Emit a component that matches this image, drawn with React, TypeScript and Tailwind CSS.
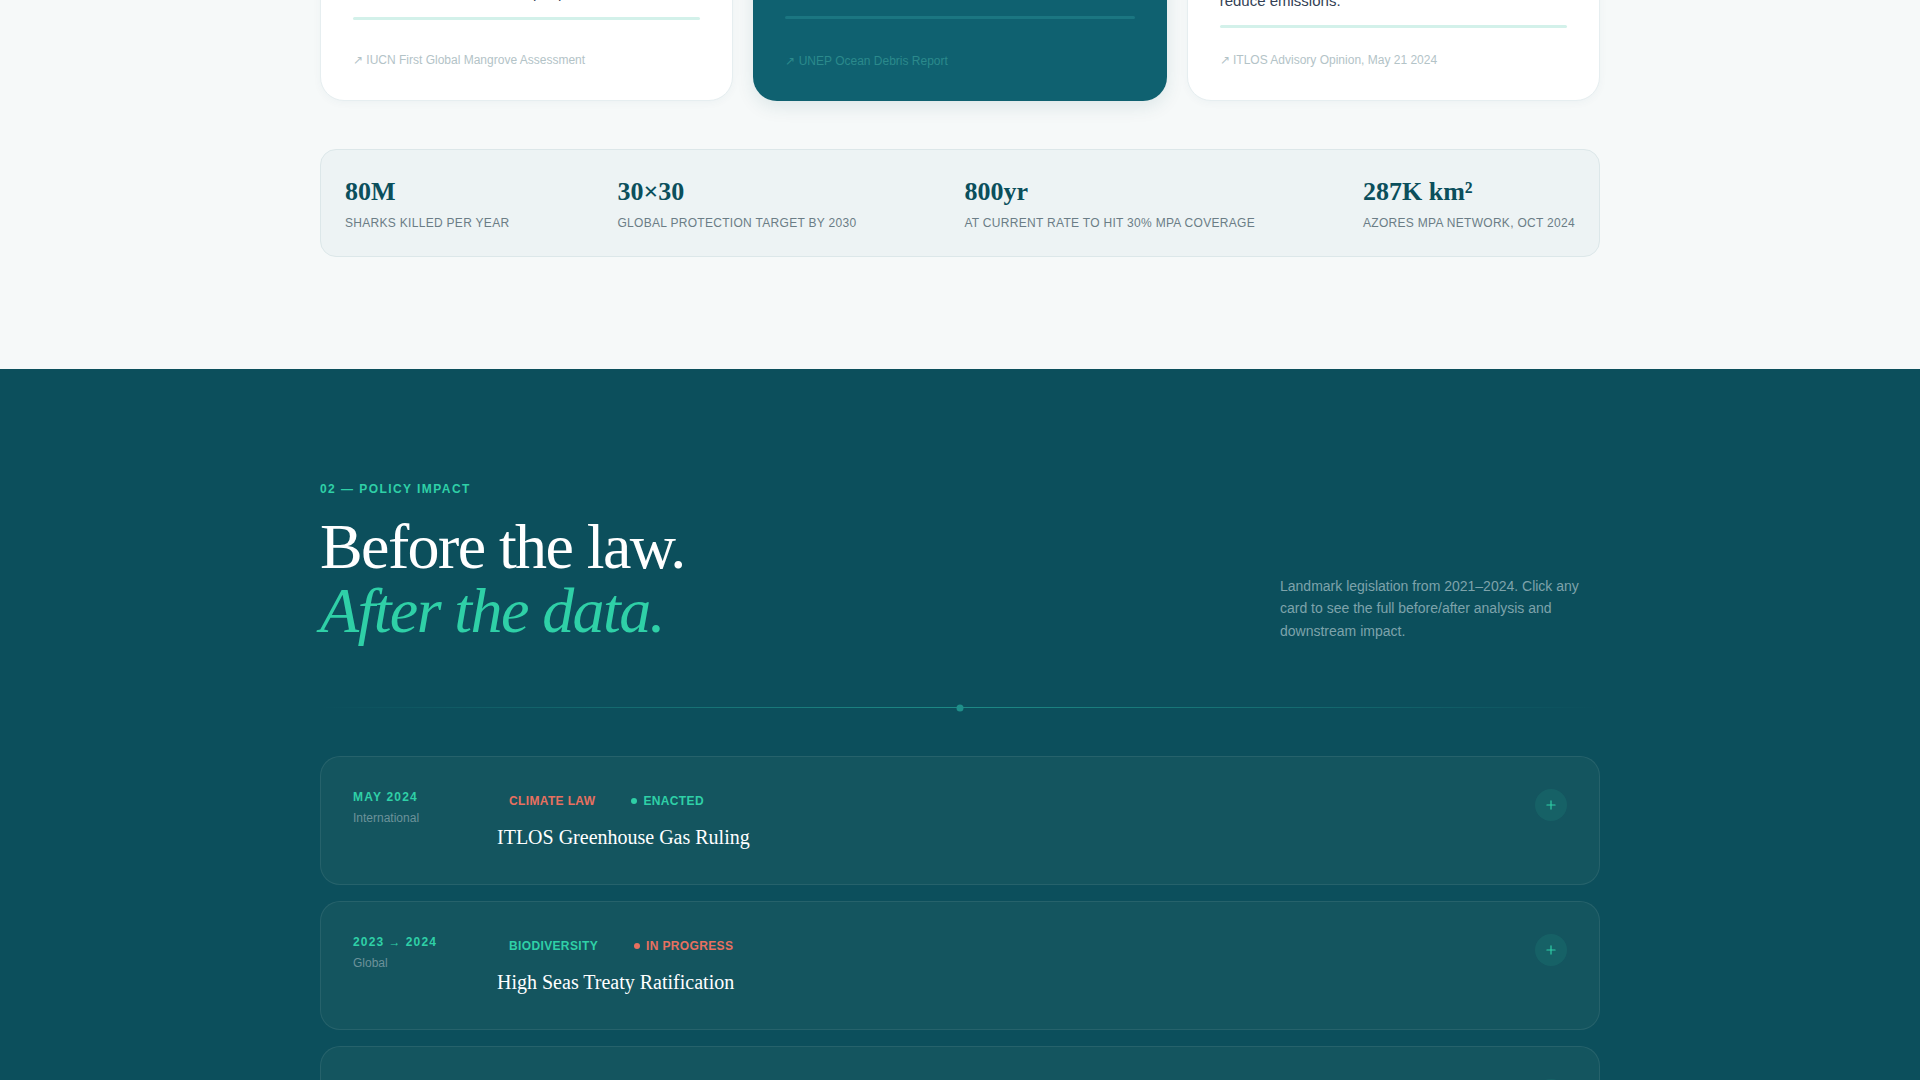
import React from 'react'
import { Plus } from 'lucide-react'

const serif = { fontFamily: '"Liberation Serif", "Times New Roman", serif' }

const evidence = [
  {
    tag: 'MANGROVES',
    value: '50%',
    text: 'of the world’s mangrove ecosystems are at risk of collapse by 2050, stripping storm protection from coasts that hold millions of people.',
    source: 'IUCN First Global Mangrove Assessment',
    dark: false,
    gap: 'mt-3',
  },
  {
    tag: 'PLASTICS',
    value: '11M t',
    text: 'of plastic enters the ocean every year, a flow set to nearly triple by 2040 without binding caps on virgin production upstream.',
    source: 'UNEP Ocean Debris Report',
    dark: true,
    gap: 'mt-3',
  },
  {
    tag: 'CLIMATE',
    value: 'Art. 194',
    text: 'Greenhouse gases count as marine pollution under UNCLOS, so every coastal state has a legal duty to reduce emissions.',
    source: 'ITLOS Advisory Opinion, May 21 2024',
    dark: false,
    gap: 'mt-5',
  },
]

const stats = [
  { value: '80M', label: 'Sharks killed per year' },
  { value: '30×30', label: 'Global protection target by 2030' },
  { value: '800yr', label: 'At current rate to hit 30% MPA coverage' },
  { value: '287K km²', label: 'Azores MPA network, Oct 2024' },
]

type Policy = {
  from: string
  to?: string
  region: string
  area: string
  areaTone: 'coral' | 'mint'
  status: string
  statusTone: 'coral' | 'mint'
  title: string
}

const policies: Policy[] = [
  { from: 'May 2024', region: 'International', area: 'Climate Law', areaTone: 'coral', status: 'Enacted', statusTone: 'mint', title: 'ITLOS Greenhouse Gas Ruling' },
  { from: '2023', to: '2024', region: 'Global', area: 'Biodiversity', areaTone: 'mint', status: 'In Progress', statusTone: 'coral', title: 'High Seas Treaty Ratification' },
  { from: 'Oct 2024', region: 'Portugal', area: 'Marine Protection', areaTone: 'mint', status: 'Enacted', statusTone: 'mint', title: 'Azores Marine Protected Area Network' },
  { from: 'Jun 2022', region: 'WTO', area: 'Fisheries', areaTone: 'mint', status: 'In Progress', statusTone: 'coral', title: 'Agreement on Fisheries Subsidies' },
]

const tone = {
  coral: 'text-[#e8705f]',
  mint: 'text-[#2fd0a7]',
}

function EvidenceCard({ item }: { item: (typeof evidence)[number] }) {
  return (
    <div
      className={`flex flex-col rounded-3xl p-8 ${
        item.dark
          ? 'bg-[#0f6170] shadow-[0_6px_18px_rgba(12,79,92,0.10)]'
          : 'border border-[#e6eef0] bg-white shadow-[0_2px_8px_rgba(12,79,92,0.04)]'
      }`}
    >
      <div className={`text-xs font-bold tracking-[0.12em] ${item.dark ? 'text-[#2fd0a7]' : 'text-[#0f6170]'}`}>
        {item.tag}
      </div>
      <div className={`mt-2 text-5xl leading-none font-bold ${item.dark ? 'text-white' : 'text-[#0b4f5c]'}`} style={serif}>
        {item.value}
      </div>
      <p className={`${item.gap} text-[15px] leading-6 ${item.dark ? 'text-[#d3eaec]' : 'text-[#334155]'}`}>{item.text}</p>
      <div className={`mt-3 h-[3px] rounded-full ${item.dark ? 'bg-[#1b7681]' : 'bg-[#d3f1ea]'}`} />
      <div className={`mt-auto pt-6 text-xs leading-4 ${item.dark ? 'text-[#2b8a8c]' : 'text-[#b3c3c7]'}`}>
        ↗ {item.source}
      </div>
    </div>
  )
}

function PolicyCard({ p }: { p: Policy }) {
  return (
    <div className="flex items-start rounded-[20px] border border-[#ffffff14] bg-[#14555f] px-8 pt-8 pb-[33px]">
      <div className="w-36 shrink-0">
        <div className="text-xs leading-4 font-bold tracking-[0.1em] text-[#2fd0a7] uppercase">
          {p.from}
          {p.to && (
            <>
              <span className="mx-1 text-xs font-normal text-[#2fd0a7]">→</span>
              {p.to}
            </>
          )}
        </div>
        <div className="mt-[5px] text-xs leading-4 text-[#6c929a]">{p.region}</div>
      </div>
      <div className="flex-1">
        <div className="flex items-center gap-3">
          <span className={`px-3 py-1 text-xs leading-4 font-bold tracking-[0.03em] uppercase ${tone[p.areaTone]}`}>
            {p.area}
          </span>
          <span
            className={`flex items-center gap-1.5 px-3 py-1 text-xs leading-4 font-bold tracking-[0.03em] uppercase ${tone[p.statusTone]}`}
          >
            <span className={`size-1.5 rounded-full ${p.statusTone === 'mint' ? 'bg-[#2fd0a7]' : 'bg-[#e8705f]'}`} />
            {p.status}
          </span>
        </div>
        <h3 className="mt-2.5 text-xl leading-7 text-white" style={serif}>
          {p.title}
        </h3>
      </div>
      <button className="grid size-8 shrink-0 place-items-center rounded-full bg-[#2fd0a7]/10 text-[#2fd0a7]">
        <Plus size={14} strokeWidth={2} />
      </button>
    </div>
  )
}

export default function App() {
  return (
    <div className="-mt-[184px] min-h-screen" style={{ fontFamily: '"Liberation Sans", Arial, sans-serif' }}>
      {/* evidence + stats */}
      <section className="bg-[#f6f9f9] pb-28">
        <div className="mx-auto w-[1280px]">
          <div className="grid grid-cols-3 gap-5">
            {evidence.map((item) => (
              <EvidenceCard key={item.tag} item={item} />
            ))}
          </div>

          <div className="mt-12 flex justify-between rounded-2xl border border-[#dce7e9] bg-[#edf3f4] px-6 pt-[27px] pb-[25px]">
            {stats.map((s) => (
              <div key={s.label}>
                <div className="text-[26px] leading-[30px] font-bold text-[#0b4f5c]" style={serif}>
                  {s.value}
                </div>
                <div className="mt-2 text-xs leading-4 tracking-wide text-[#6b7d86] uppercase">{s.label}</div>
              </div>
            ))}
          </div>
        </div>
      </section>

      {/* policy impact */}
      <section className="bg-[#0c4f5c] pt-28 pb-24">
        <div className="mx-auto w-[1280px]">
          <div className="flex items-end justify-between">
            <div>
              <div className="text-xs leading-4 font-bold tracking-[0.12em] text-[#2fd0a7]">02 — POLICY IMPACT</div>
              <h2 className="mt-[18px] text-[64px] leading-none tracking-tight text-white" style={serif}>
                <span className="block">Before the law.</span>
                <span className="block text-[#2fd0a7] italic">After the data.</span>
              </h2>
            </div>
            <p className="mb-px max-w-xs text-sm leading-[22.5px] text-[#7ea3ab]">
              Landmark legislation from 2021–2024. Click any card to see the full before/after analysis and downstream impact.
            </p>
          </div>

          <div className="relative mt-16 h-px bg-gradient-to-r from-transparent via-[#1e8a86] to-transparent">
            <div className="absolute top-1/2 left-1/2 size-[7px] -translate-x-1/2 -translate-y-1/2 rounded-full bg-[#1f8f8a]" />
          </div>

          <div className="mt-12 flex flex-col gap-4">
            {policies.map((p) => (
              <PolicyCard key={p.title} p={p} />
            ))}
          </div>
        </div>
      </section>
    </div>
  )
}
